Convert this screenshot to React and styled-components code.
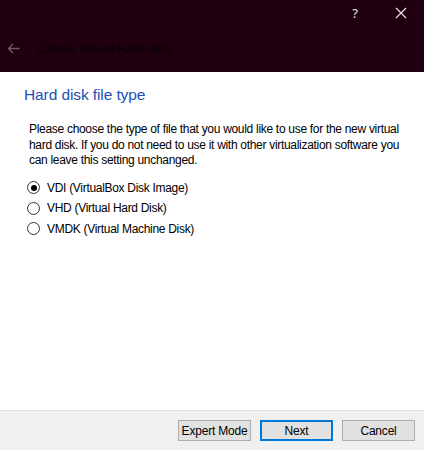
import React, { useState } from "react";
import styled, { createGlobalStyle } from "styled-components";

const GlobalStyle = createGlobalStyle`
  html, body {
    margin: 0;
    padding: 0;
    background: #ffffff;
  }
  body {
    font-family: "Liberation Sans", Arial, sans-serif;
  }
`;

const options = [
  { id: "vdi", label: "VDI (VirtualBox Disk Image)" },
  { id: "vhd", label: "VHD (Virtual Hard Disk)" },
  { id: "vmdk", label: "VMDK (Virtual Machine Disk)" },
];

const App = () => {
  const [selected, setSelected] = useState("vdi");

  return (
    <Window>
      <GlobalStyle />
      <Header>
        <TopRow>
          <TopButton>?</TopButton>
          <TopButton>
            <svg width="12" height="12" viewBox="0 0 12 12">
              <path d="M1 1L11 11M11 1L1 11" stroke="#e8e0e4" strokeWidth="1.2" />
            </svg>
          </TopButton>
        </TopRow>
        <NavRow>
          <BackArrow>
            <svg width="13" height="11" viewBox="0 0 13 11">
              <path d="M6 1L1.5 5.5L6 10M1.5 5.5H12.5" stroke="#6e5a66" strokeWidth="1.4" fill="none" />
            </svg>
          </BackArrow>
          <WizardTitle>Create Virtual Hard Disk</WizardTitle>
        </NavRow>
      </Header>

      <Body>
        <PageTitle>Hard disk file type</PageTitle>
        <Description>
          Please choose the type of file that you would like to use for the new virtual<br />
          hard disk. If you do not need to use it with other virtualization software you<br />
          can leave this setting unchanged.
        </Description>
        <RadioList>
          {options.map(opt => (
            <RadioRow key={opt.id} onClick={() => setSelected(opt.id)}>
              <RadioCircle checked={selected === opt.id} />
              <span>{opt.label}</span>
            </RadioRow>
          ))}
        </RadioList>
      </Body>

      <Footer>
        <Button>Expert Mode</Button>
        <Button primary>Next</Button>
        <Button>Cancel</Button>
      </Footer>
    </Window>
  );
};

export default App;

const Window = styled.div`
  width: 424px;
  height: 450px;
  display: flex;
  flex-direction: column;
  background: #ffffff;
  overflow: hidden;
`;

const Header = styled.div`
  height: 72px;
  background: #200010;
  display: flex;
  flex-direction: column;
`;

const TopRow = styled.div`
  display: flex;
  justify-content: flex-end;
  height: 26px;
`;

const TopButton = styled.div`
  width: 46px;
  height: 26px;
  display: flex;
  align-items: center;
  justify-content: center;
  color: #e8e0e4;
  font-size: 13px;
  font-family: "Noto Sans", sans-serif;
`;

const NavRow = styled.div`
  display: flex;
  align-items: center;
  height: 50px;
  margin-top: -2px;
`;

const BackArrow = styled.div`
  width: 37px;
  display: flex;
  justify-content: flex-start;
  padding-left: 7px;
  box-sizing: border-box;
`;

const WizardTitle = styled.div`
  color: #0a0005;
  font-size: 13px;
  letter-spacing: -0.2px;
`;

const Body = styled.div`
  flex: 1;
  padding: 12px 10px 0 24px;
`;

const PageTitle = styled.div`
  color: #1d4fb4;
  font-size: 15.5px;
  line-height: 22px;
  letter-spacing: -0.1px;
`;

const Description = styled.p`
  margin: 16px 0 0 5px;
  font-size: 12px;
  line-height: 15.5px;
  letter-spacing: -0.3px;
  white-space: nowrap;
  color: #000000;
`;

const RadioList = styled.div`
  margin-top: 11px;
  padding-left: 3px;
  display: flex;
  flex-direction: column;
  gap: 4.5px;
`;

const RadioRow = styled.label`
  display: flex;
  align-items: center;
  gap: 7px;
  font-size: 12px;
  letter-spacing: -0.3px;
  height: 16px;
  color: #000000;
  cursor: default;
`;

const RadioCircle = styled.span`
  width: 11px;
  height: 11px;
  border: 1px solid #333333;
  border-radius: 50%;
  display: inline-flex;
  align-items: center;
  justify-content: center;
  background: #ffffff;
  &::after {
    content: "";
    width: 6px;
    height: 6px;
    border-radius: 50%;
    background: ${p => (p.checked ? "#000000" : "transparent")};
  }
`;

const Footer = styled.div`
  height: 40px;
  background: #f0f0f0;
  border-top: 1px solid #dfdfdf;
  display: flex;
  align-items: center;
  justify-content: flex-end;
  gap: 9px;
  padding-right: 9px;
  box-sizing: border-box;
`;

const Button = styled.button`
  width: 73px;
  height: 21px;
  padding: 0;
  background: #e1e1e1;
  border: ${p => (p.primary ? "2px solid #0078d7" : "1px solid #adadad")};
  font-size: 12px;
  font-family: "Liberation Sans", Arial, sans-serif;
  letter-spacing: -0.2px;
  white-space: nowrap;
  color: #000000;
`;
